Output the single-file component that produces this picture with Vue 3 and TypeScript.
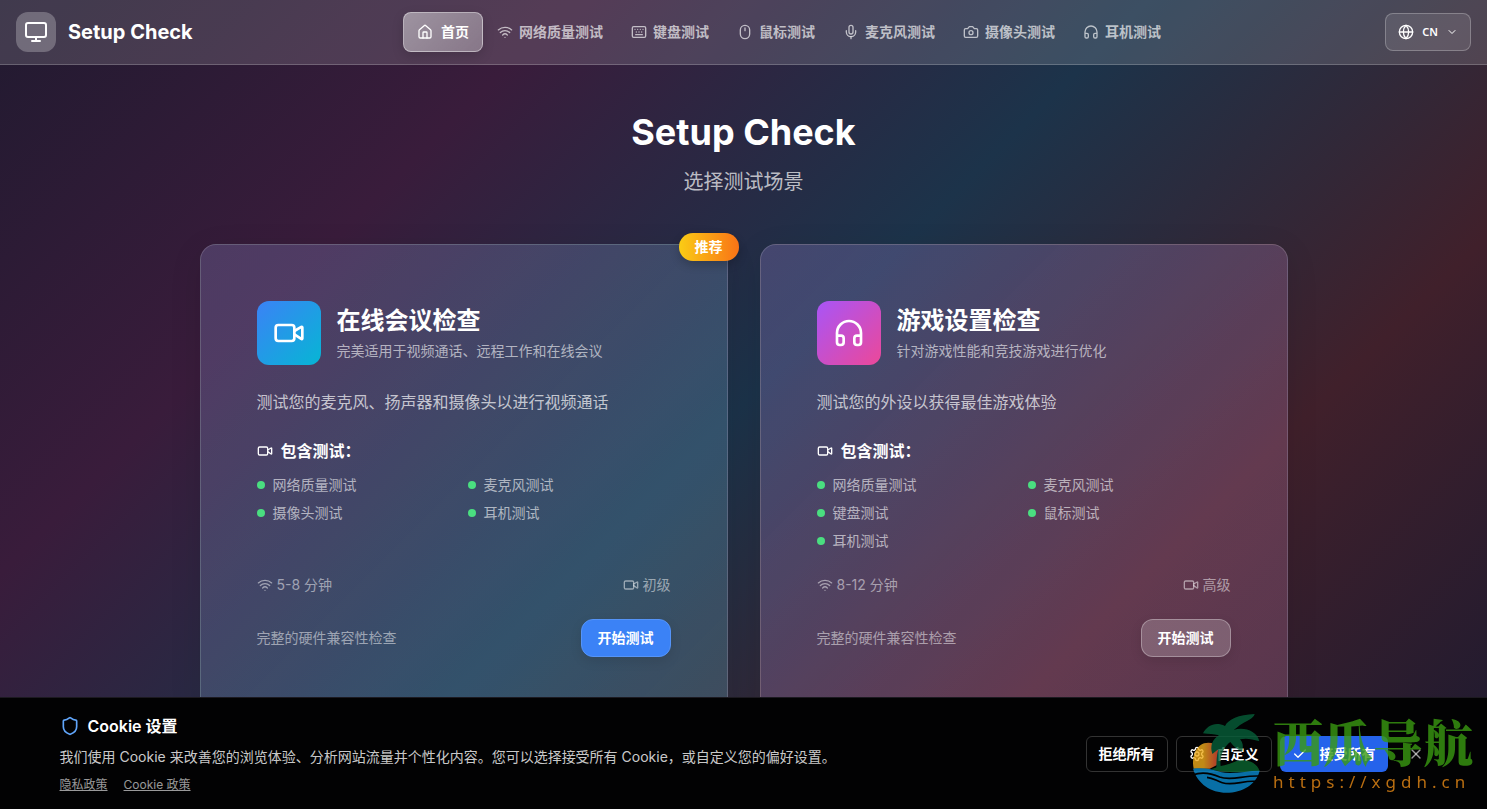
<script setup lang="ts">
import { h, type FunctionalComponent } from 'vue'

const ICONS: Record<string, string[]> = {
  monitor: ['M4 3h16a2 2 0 0 1 2 2v10a2 2 0 0 1-2 2H4a2 2 0 0 1-2-2V5a2 2 0 0 1 2-2z', 'M8 21h8', 'M12 17v4'],
  home: ['M15 21v-8a1 1 0 0 0-1-1h-4a1 1 0 0 0-1 1v8', 'M3 10a2 2 0 0 1 .709-1.528l7-5.999a2 2 0 0 1 2.582 0l7 5.999A2 2 0 0 1 21 10v9a2 2 0 0 1-2 2H5a2 2 0 0 1-2-2z'],
  wifi: ['M12 20h.01', 'M2 8.82a15 15 0 0 1 20 0', 'M5 12.859a10 10 0 0 1 14 0', 'M8.5 16.429a5 5 0 0 1 7 0'],
  keyboard: ['M4 4h16a2 2 0 0 1 2 2v12a2 2 0 0 1-2 2H4a2 2 0 0 1-2-2V6a2 2 0 0 1 2-2z', 'M6 8h.01', 'M10 8h.01', 'M14 8h.01', 'M18 8h.01', 'M8 12h.01', 'M12 12h.01', 'M16 12h.01', 'M7 16h10'],
  mouse: ['M12 2a7 7 0 0 1 7 7v6a7 7 0 0 1-14 0V9a7 7 0 0 1 7-7z', 'M12 6v4'],
  mic: ['M12 2a3 3 0 0 0-3 3v7a3 3 0 0 0 6 0V5a3 3 0 0 0-3-3z', 'M19 10v2a7 7 0 0 1-14 0v-2', 'M12 19v3'],
  camera: ['M14.5 4h-5L7 7H4a2 2 0 0 0-2 2v9a2 2 0 0 0 2 2h16a2 2 0 0 0 2-2V9a2 2 0 0 0-2-2h-3l-2.5-3z', 'M15 13a3 3 0 1 1-6 0 3 3 0 0 1 6 0z'],
  headphones: ['M3 14h3a2 2 0 0 1 2 2v3a2 2 0 0 1-2 2H5a2 2 0 0 1-2-2v-7a9 9 0 0 1 18 0v7a2 2 0 0 1-2 2h-1a2 2 0 0 1-2-2v-3a2 2 0 0 1 2-2h3'],
  video: ['m16 13 5.223 3.482a.5.5 0 0 0 .777-.416V7.87a.5.5 0 0 0-.752-.432L16 10.5', 'M4 6h10a2 2 0 0 1 2 2v8a2 2 0 0 1-2 2H4a2 2 0 0 1-2-2V8a2 2 0 0 1 2-2z'],
  globe: ['M22 12a10 10 0 1 1-20 0 10 10 0 0 1 20 0z', 'M12 2a14.5 14.5 0 0 0 0 20 14.5 14.5 0 0 0 0-20', 'M2 12h20'],
  chevron: ['m6 9 6 6 6-6'],
  shield: ['M20 13c0 5-3.5 7.5-7.66 8.95a1 1 0 0 1-.67-.01C7.5 20.5 4 18 4 13V6a1 1 0 0 1 1-1c2 0 4.5-1.2 6.24-2.72a1.17 1.17 0 0 1 1.52 0C14.51 3.81 17 5 19 5a1 1 0 0 1 1 1z'],
  check: ['M20 6 9 17l-5-5'],
  close: ['M18 6 6 18', 'm6 6 12 12'],
  settings: ['M12.22 2h-.44a2 2 0 0 0-2 2v.18a2 2 0 0 1-1 1.73l-.43.25a2 2 0 0 1-2 0l-.15-.08a2 2 0 0 0-2.73.73l-.22.38a2 2 0 0 0 .73 2.73l.15.1a2 2 0 0 1 1 1.72v.51a2 2 0 0 1-1 1.74l-.15.09a2 2 0 0 0-.73 2.73l.22.38a2 2 0 0 0 2.73.73l.15-.08a2 2 0 0 1 2 0l.43.25a2 2 0 0 1 1 1.73V20a2 2 0 0 0 2 2h.44a2 2 0 0 0 2-2v-.18a2 2 0 0 1 1-1.73l.43-.25a2 2 0 0 1 2 0l.15.08a2 2 0 0 0 2.73-.73l.22-.39a2 2 0 0 0-.73-2.73l-.15-.08a2 2 0 0 1-1-1.74v-.5a2 2 0 0 1 1-1.74l.15-.09a2 2 0 0 0 .73-2.73l-.22-.38a2 2 0 0 0-2.73-.73l-.15.08a2 2 0 0 1-2 0l-.43-.25a2 2 0 0 1-1-1.73V4a2 2 0 0 0-2-2z', 'M15 12a3 3 0 1 1-6 0 3 3 0 0 1 6 0z'],
}

const Icon: FunctionalComponent<{ name: string; size?: number }> = (props) =>
  h(
    'svg',
    {
      viewBox: '0 0 24 24',
      width: props.size ?? 16,
      height: props.size ?? 16,
      fill: 'none',
      stroke: 'currentColor',
      'stroke-width': 2,
      'stroke-linecap': 'round',
      'stroke-linejoin': 'round',
      'aria-hidden': 'true',
    },
    ICONS[props.name].map((d) => h('path', { d })),
  )
Icon.props = ['name', 'size']

interface NavItem { icon: string; label: string; active?: boolean }
const nav: NavItem[] = [
  { icon: 'home', label: '首页', active: true },
  { icon: 'wifi', label: '网络质量测试' },
  { icon: 'keyboard', label: '键盘测试' },
  { icon: 'mouse', label: '鼠标测试' },
  { icon: 'mic', label: '麦克风测试' },
  { icon: 'camera', label: '摄像头测试' },
  { icon: 'headphones', label: '耳机测试' },
]

interface Scenario {
  id: string
  icon: string
  title: string
  subtitle: string
  description: string
  tests: string[]
  duration: string
  level: string
  recommended: boolean
}
const scenarios: Scenario[] = [
  {
    id: 'meeting',
    icon: 'video',
    title: '在线会议检查',
    subtitle: '完美适用于视频通话、远程工作和在线会议',
    description: '测试您的麦克风、扬声器和摄像头以进行视频通话',
    tests: ['网络质量测试', '麦克风测试', '摄像头测试', '耳机测试'],
    duration: '5-8 分钟',
    level: '初级',
    recommended: true,
  },
  {
    id: 'gaming',
    icon: 'headphones',
    title: '游戏设置检查',
    subtitle: '针对游戏性能和竞技游戏进行优化',
    description: '测试您的外设以获得最佳游戏体验',
    tests: ['网络质量测试', '麦克风测试', '键盘测试', '鼠标测试', '耳机测试'],
    duration: '8-12 分钟',
    level: '高级',
    recommended: false,
  },
]
</script>

<template>
  <div class="page">
    <header class="topbar">
      <a class="brand" href="#">
        <span class="brand-mark"><Icon name="monitor" :size="24" /></span>
        <span>Setup Check</span>
      </a>
      <nav class="nav">
        <a v-for="item in nav" :key="item.label" href="#" class="nav-link" :class="{ active: item.active }">
          <Icon :name="item.icon" />{{ item.label }}
        </a>
      </nav>
      <button type="button" class="lang">
        <Icon name="globe" /><span>CN</span><Icon name="chevron" :size="12" />
      </button>
    </header>

    <main class="main">
      <h1>Setup Check</h1>
      <p class="lead">选择测试场景</p>

      <div class="cards">
        <section v-for="s in scenarios" :key="s.id" class="card" :class="s.id">
          <span v-if="s.recommended" class="badge">推荐</span>
          <div class="card-head">
            <div class="tile"><Icon :name="s.icon" :size="32" /></div>
            <div>
              <h2>{{ s.title }}</h2>
              <p class="subtitle">{{ s.subtitle }}</p>
            </div>
          </div>
          <p class="description">{{ s.description }}</p>
          <h3><Icon name="video" />包含测试：</h3>
          <ul class="tests">
            <li v-for="t in s.tests" :key="t">{{ t }}</li>
          </ul>
          <div class="meta">
            <span><Icon name="wifi" />{{ s.duration }}</span>
            <span><Icon name="video" />{{ s.level }}</span>
          </div>
          <div class="card-foot">
            <span>完整的硬件兼容性检查</span>
            <button type="button" class="start">开始测试</button>
          </div>
        </section>
      </div>
    </main>

    <aside class="cookies">
      <div class="cookies-inner">
        <div class="cookies-text">
          <h4><Icon name="shield" :size="20" class="shield" />Cookie 设置</h4>
          <p>我们使用 Cookie 来改善您的浏览体验、分析网站流量并个性化内容。您可以选择接受所有 Cookie，或自定义您的偏好设置。</p>
          <div class="policy-links">
            <a href="#">隐私政策</a>
            <a href="#">Cookie 政策</a>
          </div>
        </div>
        <div class="cookies-actions">
          <button type="button" class="outline">拒绝所有</button>
          <button type="button" class="outline"><Icon name="settings" />自定义</button>
          <button type="button" class="accept"><Icon name="check" />接受所有</button>
          <button type="button" class="dismiss" aria-label="关闭"><Icon name="close" /></button>
        </div>
      </div>
    </aside>

    <div class="watermark">
      <svg class="island" viewBox="0 0 270 285" width="90" height="95" aria-hidden="true">
        <defs>
          <linearGradient id="sun" x1="0" y1="0" x2="1" y2="0">
            <stop offset="0.4" stop-color="#f0ad1c" />
            <stop offset="1" stop-color="#dc4038" />
          </linearGradient>
        </defs>
        <path fill="url(#sun)" d="M32 188C24 150 40 110 76 110c12 0 22 6 32 14v50l-28 14z" />
        <path fill="#07603a" d="M60 82C72 58 98 46 126 60C136 40 166 26 215 24C212 38 190 44 170 58C164 63 158 68 152 72C182 62 222 74 229 106C205 98 188 96 171 100C180 110 181 121 178 136C164 132 152 122 142 108C128 118 117 134 113 160C111 174 113 184 116 190L100 190C100 168 101 146 106 130L88 144C80 120 88 100 108 88C92 84 76 84 60 82z" />
        <path fill="#0b6630" d="M84 190C108 180 126 178 148 170C178 154 222 164 230 196C190 198 128 204 84 190z" />
        <path fill="#0a8bd0" d="M30 188C62 184 88 190 112 198C150 206 188 194 230 194C220 236 178 260 130 260C84 260 44 234 30 188z" />
        <path fill="none" stroke="#020203" stroke-width="5" d="M30 206C60 196 86 202 110 213C144 226 180 208 228 210" />
        <path fill="none" stroke="#020203" stroke-width="5" d="M72 214C90 216 100 224 118 230C150 240 178 224 216 226" />
      </svg>
      <div class="watermark-text">
        <strong>西瓜导航</strong>
        <span>https://xgdh.cn</span>
      </div>
    </div>
  </div>
</template>

<style>
body {
  margin: 0;
  background: #fff;
}
</style>

<style scoped>
.page {
  box-sizing: border-box;
  min-height: 100vh;
  margin-right: 10px;
  color: #fff;
  font-family: Inter, "Noto Sans CJK SC", sans-serif;
  font-size: 14px;
  line-height: 20px;
  background: linear-gradient(135deg, #211a30 0%, #391c3b 25%, #1c334a 50%, #40202b 75%, #1c1a30 100%);
}
h1, h2, h3, h4, p, ul {
  margin: 0;
  padding: 0;
}
a {
  color: inherit;
  text-decoration: none;
}
button {
  box-sizing: border-box;
  padding: 0;
  border: 0;
  background: none;
  color: inherit;
  font: inherit;
  cursor: pointer;
}
svg {
  flex: none;
  display: block;
}

.topbar {
  display: flex;
  align-items: center;
  justify-content: space-between;
  height: 64px;
  padding: 0 16px;
  border-bottom: 1px solid rgba(255, 255, 255, 0.2);
  background: rgba(255, 255, 255, 0.14);
}
.brand {
  display: flex;
  align-items: center;
  gap: 12px;
  font-size: 20px;
  font-weight: 700;
  line-height: 28px;
}
.brand-mark {
  display: grid;
  place-items: center;
  width: 40px;
  height: 40px;
  border-radius: 12px;
  background: rgba(255, 255, 255, 0.25);
}
.nav {
  display: flex;
  align-items: center;
}
.nav-link {
  display: flex;
  align-items: center;
  gap: 6px;
  padding: 10px 14px;
  color: rgba(255, 255, 255, 0.66);
  font-weight: 600;
}
.nav-link.active {
  gap: 8px;
  padding: 9px 13px;
  border: 1px solid rgba(255, 255, 255, 0.4);
  border-radius: 8px;
  color: #fff;
  background: linear-gradient(135deg, rgba(255, 255, 255, 0.45), rgba(255, 255, 255, 0.3));
  box-shadow: 0 4px 12px rgba(0, 0, 0, 0.15);
}
.lang {
  display: flex;
  align-items: center;
  gap: 8px;
  height: 38px;
  padding: 0 12px;
  border: 1px solid rgba(255, 255, 255, 0.25);
  border-radius: 8px;
  background: rgba(255, 255, 255, 0.1);
  font-family: "Noto Sans", sans-serif;
  font-size: 11px;
  font-weight: 600;
}

.main {
  max-width: 1088px;
  margin: 0 auto;
  padding: 47px 16px 48px;
}
h1 {
  font-size: 36px;
  font-weight: 700;
  line-height: 40px;
  text-align: center;
}
.lead {
  margin-top: 16px;
  color: rgba(255, 255, 255, 0.7);
  font-size: 20px;
  line-height: 28px;
  text-align: center;
}
.cards {
  display: grid;
  grid-template-columns: 1fr 1fr;
  gap: 32px;
  margin-top: 48px;
}
.card {
  position: relative;
  display: flex;
  flex-direction: column;
  padding: 56px;
  border: 1px solid rgba(255, 255, 255, 0.16);
  border-radius: 16px;
  box-shadow: 0 8px 32px rgba(0, 0, 0, 0.1);
}
.meeting {
  background:
    linear-gradient(135deg, rgba(99, 102, 241, 0.12), rgba(6, 182, 212, 0.1)),
    rgba(255, 255, 255, 0.11);
}
.gaming {
  background:
    linear-gradient(135deg, rgba(139, 92, 246, 0.14), rgba(236, 72, 153, 0.12)),
    rgba(255, 255, 255, 0.1);
}
.badge {
  position: absolute;
  top: -12px;
  right: -12px;
  padding: 4px 16px;
  border-radius: 14px;
  background: linear-gradient(90deg, #facc15, #f97316);
  font-weight: 600;
  box-shadow: 0 4px 10px rgba(0, 0, 0, 0.2);
}
.card-head {
  display: flex;
  align-items: center;
  gap: 16px;
}
.tile {
  display: grid;
  place-items: center;
  width: 64px;
  height: 64px;
  border-radius: 12px;
}
.meeting .tile {
  background: linear-gradient(135deg, #3b82f6, #06b6d4);
}
.gaming .tile {
  background: linear-gradient(135deg, #a855f7, #ec4899);
}
h2 {
  font-size: 24px;
  font-weight: 700;
  line-height: 32px;
}
.subtitle {
  margin-top: 4px;
  color: rgba(255, 255, 255, 0.6);
}
.description {
  margin-top: 24px;
  color: rgba(255, 255, 255, 0.7);
  font-size: 16px;
  line-height: 26px;
}
h3 {
  display: flex;
  align-items: center;
  gap: 8px;
  margin-top: 24px;
  font-size: 16px;
  font-weight: 600;
  line-height: 24px;
}
.tests {
  flex: 1;
  display: grid;
  grid-template-columns: 1fr 1fr;
  align-content: start;
  gap: 8px;
  margin-top: 12px;
  list-style: none;
  color: rgba(255, 255, 255, 0.6);
}
.tests li {
  display: flex;
  align-items: center;
  gap: 8px;
}
.tests li::before {
  content: "";
  width: 8px;
  height: 8px;
  border-radius: 50%;
  background: #4ade80;
}
.meta,
.card-foot {
  display: flex;
  align-items: center;
  justify-content: space-between;
  margin-top: 24px;
  color: rgba(255, 255, 255, 0.5);
}
.meta span {
  display: flex;
  align-items: center;
  gap: 4px;
}
.start {
  height: 38px;
  padding: 0 16px;
  border: 1px solid rgba(255, 255, 255, 0.3);
  border-radius: 12px;
  background: rgba(255, 255, 255, 0.2);
  color: #fff;
  font-weight: 600;
  box-shadow: 0 4px 12px rgba(0, 0, 0, 0.1);
}
.meeting .start {
  border-color: #5594f8;
  background: #3b82f6;
}

.cookies {
  position: fixed;
  right: 10px;
  bottom: 0;
  left: 0;
  border-top: 1px solid #1c1a20;
  background: #020203;
}
.cookies-inner {
  box-sizing: border-box;
  display: flex;
  align-items: center;
  justify-content: space-between;
  max-width: 1400px;
  margin: 0 auto;
  padding: 16px;
}
h4 {
  display: flex;
  align-items: center;
  gap: 8px;
  font-size: 16px;
  font-weight: 600;
  line-height: 24px;
}
.shield {
  color: #60a5fa;
}
.cookies-text p {
  margin-top: 8px;
  color: rgba(255, 255, 255, 0.8);
  line-height: 21px;
}
.policy-links {
  display: flex;
  gap: 16px;
  margin-top: 10px;
  color: rgba(255, 255, 255, 0.6);
  font-size: 12px;
  line-height: 16px;
}
.policy-links a {
  text-decoration: underline;
}
.cookies-actions {
  display: flex;
  align-items: center;
  gap: 8px;
}
.outline,
.accept {
  display: flex;
  align-items: center;
  gap: 12px;
  height: 36px;
  padding: 0 12px;
  border-radius: 6px;
  font-weight: 600;
}
.outline {
  border: 1px solid #333;
}
.accept {
  background: #2563eb;
}
.dismiss {
  display: grid;
  place-items: center;
  width: 24px;
  height: 24px;
  margin-left: 8px;
  color: rgba(255, 255, 255, 0.6);
}

.watermark {
  position: fixed;
  right: 24px;
  bottom: 8px;
  display: flex;
  align-items: center;
  pointer-events: none;
  opacity: 0.8;
}
.watermark-text {
  display: flex;
  flex-direction: column;
  gap: 8px;
}
.watermark strong {
  color: #3a9a12;
  font-family: "Noto Serif CJK SC", "Noto Sans CJK SC", serif;
  font-size: 50px;
  font-weight: 900;
  line-height: 48px;
}
.watermark span {
  color: #e88a16;
  font-family: "Noto Sans", sans-serif;
  font-size: 17px;
  line-height: 20px;
  letter-spacing: 5px;
}
</style>
